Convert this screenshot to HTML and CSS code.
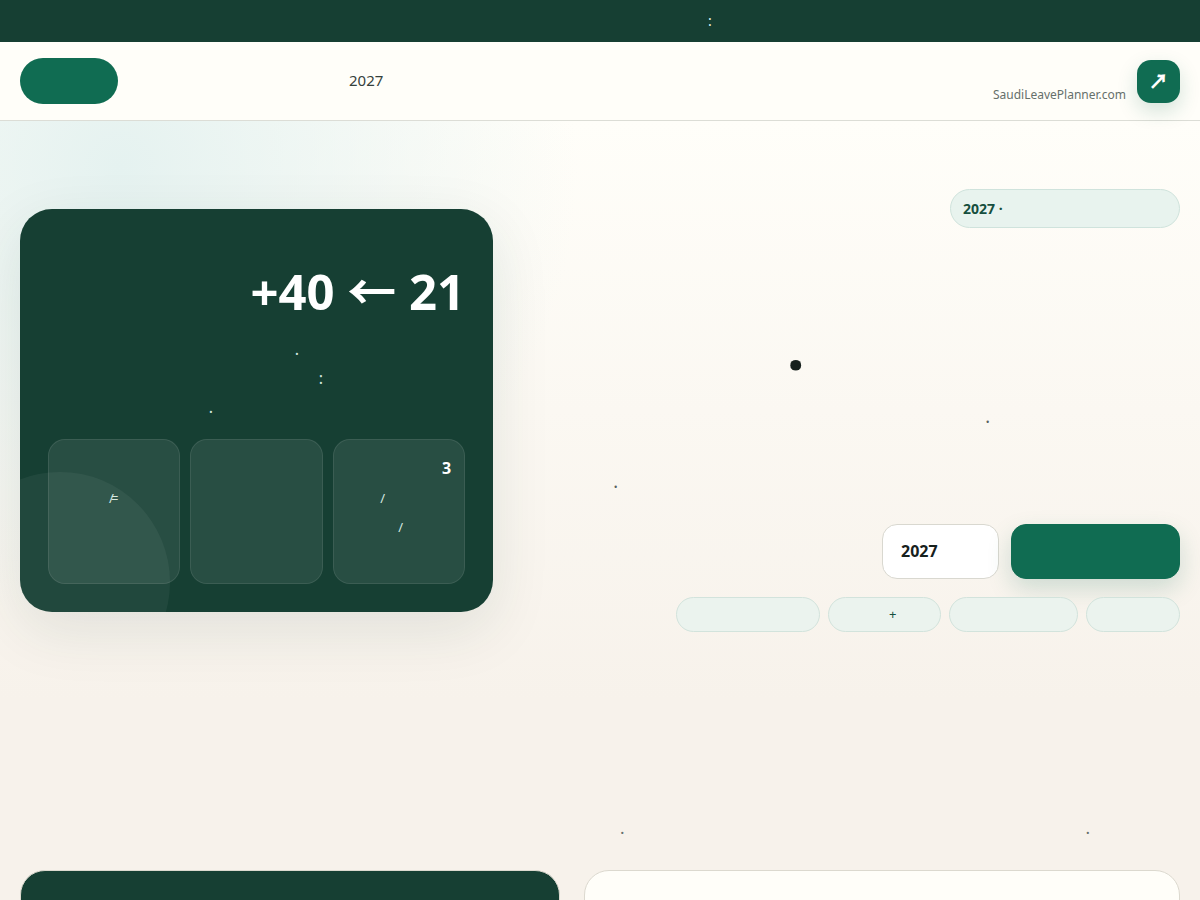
FILE: index.html
```html
<!DOCTYPE html>
<html lang="en">
<head>
<meta charset="utf-8">
<meta name="viewport" content="width=device-width, initial-scale=1">
<title>SaudiLeavePlanner.com</title>
<link rel="stylesheet" href="styles.css">
</head>
<body>
<div class="topbar"><span>:</span></div>
<header class="header">
  <a class="header-cta" href="#planner" aria-label="Planner"></a>
  <nav class="nav"><a href="#year">2027</a></nav>
  <a class="brand" href="#home">
    <span class="brand-name">SaudiLeavePlanner.com</span>
    <span class="brand-mark">↗</span>
  </a>
</header>
<main>
  <section class="hero">
    <article class="card">
      <h2 class="card-title">+40 ← 21</h2>
      <div class="card-text">
        <p class="note-a">.</p>
        <p class="note-b">:</p>
        <p class="note-c">.</p>
      </div>
      <div class="stats">
        <div class="stat"><strong></strong><span class="stat-a">/<span class="overlap">=</span></span></div>
        <div class="stat"></div>
        <div class="stat"><strong>3</strong><span class="stat-b">/</span><span class="stat-c">/</span></div>
      </div>
    </article>
    <div class="intro">
      <p class="eyebrow">2027 ·</p>
      <h1 class="title">.</h1>
      <div class="lead">
        <p class="lead-a">.</p>
        <p class="lead-b">.</p>
      </div>
      <div class="actions">
        <a class="button button-light" href="#year">2027</a>
        <button class="button button-primary" type="button" aria-label="Plan"></button>
      </div>
      <ul class="chips">
        <li class="chip chip-xl"></li>
        <li class="chip chip-md">+</li>
        <li class="chip chip-lg"></li>
        <li class="chip chip-sm"></li>
      </ul>
    </div>
  </section>
  <section class="plans">
    <p class="plans-text"><span>.</span><span>.</span></p>
    <div class="panels">
      <div class="panel panel-dark"></div>
      <div class="panel"></div>
    </div>
  </section>
</main>
</body>
</html>
```
FILE: styles.css
```css
* { box-sizing: border-box; }
body {
  margin: 0;
  background: #f7f2eb;
  color: #17211d;
  font: 16px/29px "Noto Sans", "Noto Sans CJK JP", sans-serif;
}
h1, h2, p, ul { margin: 0; padding: 0; }
a { color: inherit; text-decoration: none; }

.topbar {
  height: 42px;
  padding-left: 59%;
  background: #163f33;
  color: #e8f3ef;
  font-size: 14px;
  line-height: 42px;
}
.header {
  display: flex;
  align-items: center;
  padding: 16px 20px;
  background: #fffef9;
  border-bottom: 1px solid #dcddd6;
}
.header-cta {
  width: 98px;
  height: 46px;
  border-radius: 23px;
  background: #106c52;
}
.nav {
  flex: 1;
  padding: 0 0 2px 231px;
  color: #35413c;
  font-size: 15px;
  line-height: 28px;
}
.brand { display: flex; align-items: center; gap: 11px; }
.brand-name {
  padding-top: 28px;
  color: #66706b;
  font-size: 12px;
  line-height: 18px;
}
.brand-mark {
  display: grid;
  place-items: center;
  width: 43px;
  height: 43px;
  border-radius: 14px;
  background: #106c52;
  box-shadow: 0 8px 20px rgba(16, 108, 82, 0.18);
  color: #fff;
  font-size: 20px;
  font-weight: 800;
}

.hero {
  display: grid;
  grid-template-columns: 3fr 4fr;
  align-items: center;
  gap: 56px;
  padding: 68px 20px;
  background:
    radial-gradient(circle at 10% 8%, #e5f2f0, rgba(229, 242, 240, 0) 38%),
    linear-gradient(#fffef9, #f7f2eb);
}
.card {
  position: relative;
  overflow: hidden;
  padding: 52px 28px 28px;
  border-radius: 32px;
  background: #163f33;
  color: #d5e8e0;
  box-shadow: 0 18px 60px rgba(22, 63, 51, 0.1);
}
.card::after {
  content: "";
  position: absolute;
  left: -70px;
  bottom: -80px;
  width: 220px;
  height: 220px;
  border-radius: 50%;
  background: rgba(255, 255, 255, 0.05);
}
.card-title {
  color: #fff;
  font-size: 49px;
  font-weight: 700;
  line-height: 60px;
  text-align: right;
}
.card-text { padding: 14px 0 17px; text-align: right; }
.note-a { padding-right: 166px; }
.note-b { padding-right: 142px; }
.note-c { padding-right: 252px; }
.stats { display: grid; grid-template-columns: repeat(3, 1fr); gap: 10px; }
.stat {
  display: flex;
  flex-direction: column;
  min-height: 145px;
  padding: 14px 13px;
  border: 1px solid rgba(255, 255, 255, 0.09);
  border-radius: 17px;
  background: rgba(255, 255, 255, 0.08);
  font-size: 13px;
  text-align: right;
}
.stat strong { min-height: 30px; color: #fff; font-size: 16px; }
.stat-a { padding-right: 48px; }
.stat-b { padding-right: 66px; }
.stat-c { padding-right: 48px; }
.overlap { margin-left: -3px; }

.intro { display: flex; flex-direction: column; align-items: flex-end; }
.eyebrow {
  width: 230px;
  padding: 4px 12px;
  border: 1px solid #cfe3dc;
  border-radius: 20px;
  background: #e8f3ee;
  color: #164f3e;
  font-size: 14px;
  font-weight: 700;
}
.title {
  align-self: stretch;
  padding: 84px 376px 0 0;
  font-size: 58px;
  font-weight: 800;
  line-height: 72px;
  text-align: right;
}
.lead {
  align-self: stretch;
  padding: 16px 0 27px;
  color: #56615c;
  font-size: 18px;
  line-height: 32px;
  text-align: right;
}
.lead-a { padding-right: 190px; }
.lead-b { padding: 33px 562px 0 0; }
.actions { display: flex; gap: 12px; }
.button {
  height: 55px;
  border: 1px solid #d9d8d0;
  border-radius: 15px;
  font: 700 16px/53px "Noto Sans", sans-serif;
}
.button-light { width: 117px; padding-left: 18px; background: #fff; }
.button-primary {
  width: 169px;
  border-color: #106c52;
  background: #106c52;
  box-shadow: 0 10px 24px rgba(16, 108, 82, 0.18);
}
.chips { display: flex; gap: 8px; padding-top: 18px; list-style: none; }
.chip {
  height: 35px;
  border: 1px solid #d2e3dc;
  border-radius: 18px;
  background: #ebf3ee;
  color: #164f3e;
  font-size: 13px;
  line-height: 33px;
}
.chip-xl { width: 144px; }
.chip-lg { width: 129px; }
.chip-md { width: 113px; padding-left: 60px; }
.chip-sm { width: 94px; }

.plans { padding: 113px 20px 72px; }
.plans-text {
  display: flex;
  justify-content: space-between;
  padding: 0 90px 28px 600px;
  color: #66706b;
  font-size: 17px;
}
.panels { display: grid; grid-template-columns: 540fr 596fr; gap: 24px; }
.panel {
  min-height: 320px;
  border: 1px solid #dcd9cf;
  border-radius: 25px;
  background: #fffef9;
}
.panel-dark { background: #163f33; }
```
